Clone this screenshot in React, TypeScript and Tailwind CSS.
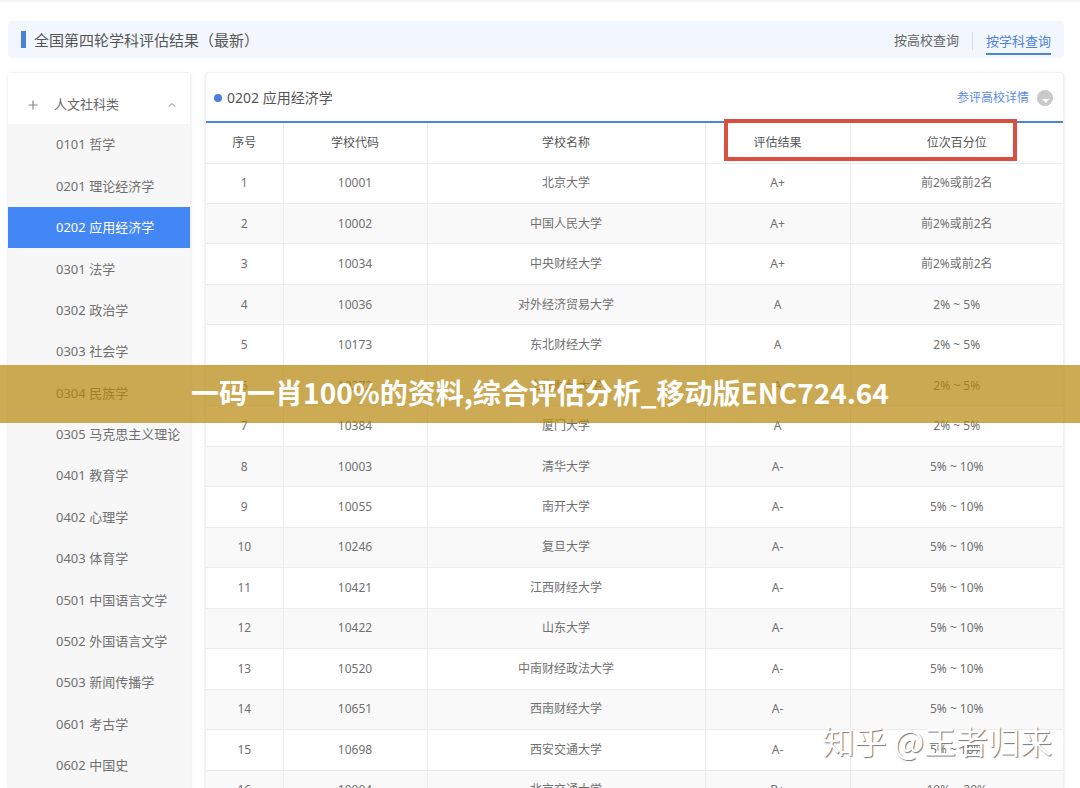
import { ChevronUp, Plus } from 'lucide-react';
import { useState } from 'react';

interface Subject {
  code: string;
  name: string;
}

interface School {
  code: string;
  name: string;
  grade: string;
  percentile: string;
}

const subjects: Subject[] = [
  { code: '0101', name: '哲学' },
  { code: '0201', name: '理论经济学' },
  { code: '0202', name: '应用经济学' },
  { code: '0301', name: '法学' },
  { code: '0302', name: '政治学' },
  { code: '0303', name: '社会学' },
  { code: '0304', name: '民族学' },
  { code: '0305', name: '马克思主义理论' },
  { code: '0401', name: '教育学' },
  { code: '0402', name: '心理学' },
  { code: '0403', name: '体育学' },
  { code: '0501', name: '中国语言文学' },
  { code: '0502', name: '外国语言文学' },
  { code: '0503', name: '新闻传播学' },
  { code: '0601', name: '考古学' },
  { code: '0602', name: '中国史' },
];

const schools: School[] = [
  { code: '10001', name: '北京大学', grade: 'A+', percentile: '前2%或前2名' },
  { code: '10002', name: '中国人民大学', grade: 'A+', percentile: '前2%或前2名' },
  { code: '10034', name: '中央财经大学', grade: 'A+', percentile: '前2%或前2名' },
  { code: '10036', name: '对外经济贸易大学', grade: 'A', percentile: '2% ~ 5%' },
  { code: '10173', name: '东北财经大学', grade: 'A', percentile: '2% ~ 5%' },
  { code: '10272', name: '上海财经大学', grade: 'A', percentile: '2% ~ 5%' },
  { code: '10384', name: '厦门大学', grade: 'A', percentile: '2% ~ 5%' },
  { code: '10003', name: '清华大学', grade: 'A-', percentile: '5% ~ 10%' },
  { code: '10055', name: '南开大学', grade: 'A-', percentile: '5% ~ 10%' },
  { code: '10246', name: '复旦大学', grade: 'A-', percentile: '5% ~ 10%' },
  { code: '10421', name: '江西财经大学', grade: 'A-', percentile: '5% ~ 10%' },
  { code: '10422', name: '山东大学', grade: 'A-', percentile: '5% ~ 10%' },
  { code: '10520', name: '中南财经政法大学', grade: 'A-', percentile: '5% ~ 10%' },
  { code: '10651', name: '西南财经大学', grade: 'A-', percentile: '5% ~ 10%' },
  { code: '10698', name: '西安交通大学', grade: 'A-', percentile: '5% ~ 10%' },
  { code: '10004', name: '北京交通大学', grade: 'B+', percentile: '10% ~ 20%' },
];

const columns = ['序号', '学校代码', '学校名称', '评估结果', '位次百分位'];

function TopBar() {
  return (
    <header className="flex h-[37px] items-center justify-between rounded bg-[#f2f7fd] px-[13px]">
      <div className="flex items-center gap-2">
        <span className="h-[17px] w-[5px] bg-[#4a80dc]" />
        <h1 className="pt-[2px] text-[15px] text-[#555]">全国第四轮学科评估结果（最新）</h1>
      </div>
      <nav className="flex items-center pt-[2px] text-[13px]">
        <a href="#school" className="text-[#666]">按高校查询</a>
        <span className="mx-[13px] h-[18px] w-px bg-[#d5dcea]" />
        <a href="#subject" className="mt-1 border-b-2 border-[#5286c8] pb-[2px] leading-5 text-[#4f82dc]">
          按学科查询
        </a>
      </nav>
    </header>
  );
}

function Sidebar() {
  const [active, setActive] = useState('0202');

  return (
    <aside className="flex w-[183px] shrink-0 flex-col rounded-t border-t border-r border-[#f2f2f2] bg-[#f7f7f7] shadow-sm">
      <button className="flex h-[51px] shrink-0 items-center bg-white pt-3 pr-3 pl-[18px] text-[13px] text-[#666]">
        <Plus className="h-[14px] w-[14px] text-[#888]" strokeWidth={2} />
        <span className="ml-[14px]">人文社科类</span>
        <ChevronUp className="ml-auto h-3 w-3 text-[#888]" strokeWidth={2} />
      </button>
      <ul className="grid h-[662px] shrink-0 auto-rows-fr">
        {subjects.map((s) => (
          <li key={s.code} className="grid">
            <button
              onClick={() => setActive(s.code)}
              className={`pt-px pl-12 text-left text-[13px] whitespace-nowrap ${
                active === s.code ? 'bg-[#4386f5] text-white' : 'text-[#707070]'
              }`}
            >
              {s.code} {s.name}
            </button>
          </li>
        ))}
      </ul>
    </aside>
  );
}

function ResultTable() {
  return (
    <table className="h-[688px] w-full table-fixed border-collapse text-center text-xs text-[#707070]">
      <colgroup>
        <col className="w-[77px]" />
        <col className="w-[144px]" />
        <col />
        <col className="w-[145px]" />
        <col className="w-[213px]" />
      </colgroup>
      <thead>
        <tr className="h-10 border-b border-[#ececec] text-[#555]">
          {columns.map((c) => (
            <th key={c} className="border-r border-[#ececec] font-normal last:border-r-0">{c}</th>
          ))}
        </tr>
      </thead>
      <tbody>
        {schools.map((s, i) => (
          <tr key={s.code} className="border-b border-[#ececec] even:bg-[#f9f9f9]">
            <td className="border-r border-[#ececec]">{i + 1}</td>
            <td className="border-r border-[#ececec]">{s.code}</td>
            <td className="border-r border-[#ececec]">{s.name}</td>
            <td className="border-r border-[#ececec]">{s.grade}</td>
            <td>{s.percentile}</td>
          </tr>
        ))}
      </tbody>
    </table>
  );
}

function ResultPanel() {
  return (
    <section className="relative min-w-0 flex-1 rounded-t border border-[#f0f0f0] bg-white shadow-sm">
      <div className="flex h-[50px] items-center justify-between border-b-2 border-[#4f82dc] pt-[2px] pr-[10px] pl-2">
        <div className="flex items-center gap-[5px]">
          <span className="h-2 w-2 rounded-full bg-[#4a80dc]" />
          <h2 className="text-sm text-[#555]">0202 应用经济学</h2>
        </div>
        <a href="#detail" className="flex items-center gap-2 text-xs text-[#5b8ae6]">
          参评高校详情
          <svg viewBox="0 0 16 16" className="h-4 w-4">
            <circle cx="8" cy="8" r="8" fill="#c9c9c9" />
            <path d="M4.6 8.4q4.2 1 8.4 0L8.8 13z" fill="#fff" />
          </svg>
        </a>
      </div>
      <ResultTable />
      {/* Highlight frame over the last two column heads */}
      <div className="absolute top-[46px] right-[46px] h-[42px] w-[293px] border-4 border-[#d94f41]" />
    </section>
  );
}

export default function App() {
  return (
    <div className="relative flex h-screen flex-col overflow-hidden border-t-2 border-[#f5f5f5] bg-white pr-4 pl-2 font-['Noto_Sans','Noto_Sans_CJK_SC',sans-serif]">
      <div className="mt-[19px] mb-[14px]">
        <TopBar />
      </div>
      <main className="flex min-h-0 flex-1 gap-[14px]">
        <Sidebar />
        <ResultPanel />
      </main>

      {/* Watermark */}
      <div className="absolute right-7 bottom-7 font-['Noto_Sans_CJK_SC',sans-serif] text-[32px] leading-10 font-normal text-white [text-shadow:1px_1px_1px_#777]">
        知乎 @王者归来
      </div>

      {/* Title banner */}
      <div className="absolute inset-x-0 top-[363px] flex h-[58px] items-center justify-center bg-[#b8860b]/70 pb-1 font-['Noto_Sans_CJK_SC',sans-serif] text-[28px] font-bold text-white">
        一码一肖100%的资料,综合评估分析_移动版ENC724.64
      </div>
    </div>
  );
}
